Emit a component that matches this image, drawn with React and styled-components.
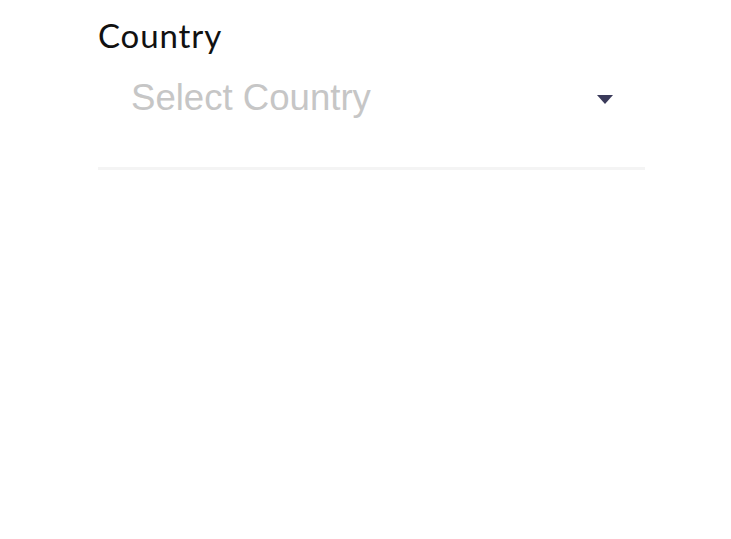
import styled, { createGlobalStyle } from "styled-components";

const Global = createGlobalStyle`
  body {
    margin: 0;
    background: #fff;
    font-family: "Liberation Sans", Arial, sans-serif;
  }
`

const Field = styled.div`
  width: 547px;
  margin-left: 98px;
  padding-top: 15px;
`
const Label = styled.label`
  display: block;
  font-family: Lato, "Noto Sans", sans-serif;
  font-weight: 400;
  font-size: 33px;
  line-height: 40px;
  color: #111;
  letter-spacing: 0.9px;
`
const SelectBox = styled.div`
  display: flex;
  align-items: center;
  justify-content: space-between;
  padding: 0 32px 33px 33px;
  height: 72px;
  margin-top: 7px;
  border-bottom: 3px solid #f4f4f4;
`
const Placeholder = styled.span`
  font-size: 36.6px;
  color: #c6c6c6;
`
const Caret = styled.svg`
  width: 16px;
  height: 9px;
  display: block;
  margin-top: 2px;
`

export default function App() {
  return (
    <>
      <Global />
      <Field>
        <Label>Country</Label>
        <SelectBox>
          <Placeholder>Select Country</Placeholder>
          <Caret viewBox="0 0 16 9">
            <path d="M0 0H16L8 9Z" fill="#3a3a5a" />
          </Caret>
        </SelectBox>
      </Field>
    </>
  )
}
